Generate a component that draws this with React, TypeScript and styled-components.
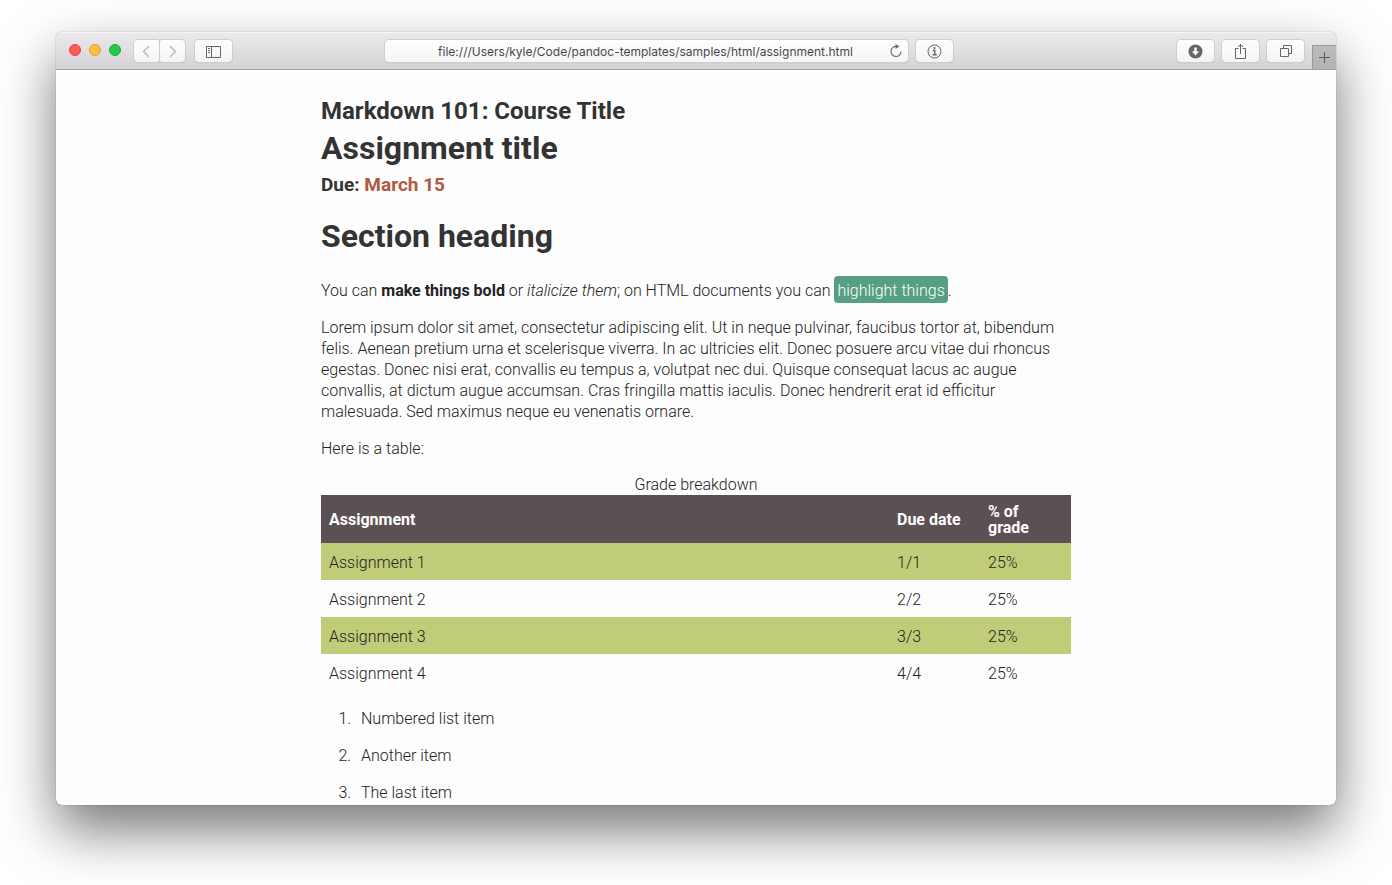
import React from "react";
import styled, { createGlobalStyle } from "styled-components";

const GlobalStyle = createGlobalStyle`
  *, *::before, *::after { box-sizing: border-box; }
  body { margin: 0; background: #fff; }
`;

const Desktop = styled.div`
  display: flex;
  height: 100vh;
  padding: 32px 56px 80px;
  overflow: hidden;
`;

const BrowserWindow = styled.div`
  flex: 1;
  min-width: 0;
  display: flex;
  flex-direction: column;
  overflow: hidden;
  border-radius: 6px;
  background: #fdfdfd;
  box-shadow: 0 0 1px rgba(0, 0, 0, 0.6), 0 25px 55px rgba(0, 0, 0, 0.54);
`;

const Toolbar = styled.header`
  flex: none;
  display: flex;
  height: 38px;
  background: linear-gradient(#ebe9eb, #d5d3d5);
  border-top: 1px solid #f5f4f5;
  border-bottom: 1px solid #a3a1a3;
`;

const ToolGroup = styled.div<{ $end?: boolean }>`
  flex: 1 0 ${(p) => (p.$end ? "67px" : "0px")};
  display: flex;
  align-items: center;
  justify-content: ${(p) => (p.$end ? "flex-end" : "flex-start")};
  gap: ${(p) => (p.$end ? "8px" : "10px")};
  padding-left: ${(p) => (p.$end ? "0" : "13px")};
`;

const TrafficLights = styled.div`
  display: flex;
  gap: 8px;
  margin: 0 3px 2px 0;
`;

const Light = styled.button<{ $fill: string; $edge: string }>`
  width: 12px;
  height: 12px;
  padding: 0;
  border: 1px solid ${(p) => p.$edge};
  border-radius: 50%;
  background: ${(p) => p.$fill};
`;

const NavPair = styled.div`
  display: flex;
  gap: 1px;
`;

const ToolButton = styled.button<{ $width?: number; $side?: "left" | "right" }>`
  display: flex;
  align-items: center;
  justify-content: center;
  flex: none;
  width: ${(p) => p.$width ?? 37}px;
  height: 22px;
  padding: 0;
  border: 0;
  border-radius: ${(p) => (p.$side === "left" ? "4px 2px 2px 4px" : p.$side === "right" ? "2px 4px 4px 2px" : "4px")};
  background: linear-gradient(#fefefe, #f4f4f4);
  box-shadow: 0 0 0 1px #cfcdcf, 0 1px 1px #aaa;
  color: #666;
`;

const AddressGroup = styled.div`
  flex: 0 1 568px;
  display: flex;
  align-items: center;
  gap: 8px;
`;

const AddressBar = styled.div`
  flex: 1;
  display: flex;
  align-items: center;
  height: 22px;
  padding: 0 5px 0 17px;
  border-radius: 4px;
  background: linear-gradient(#fefefe, #f6f6f6);
  box-shadow: 0 0 0 1px #cfcdcf, 0 1px 1px #aaa;
`;

const AddressInput = styled.input`
  flex: 1;
  min-width: 0;
  padding: 2px 0 0;
  border: 0;
  outline: 0;
  background: transparent;
  color: #484848;
  font: 12px/20px Inter, "Liberation Sans", sans-serif;
  text-align: center;
`;

const ReloadButton = styled.button`
  display: flex;
  padding: 0;
  border: 0;
  background: transparent;
  color: #6c6c6c;
`;

const NewTabButton = styled.button`
  align-self: flex-end;
  display: flex;
  align-items: center;
  justify-content: center;
  width: 24px;
  height: 24px;
  padding: 0;
  border: 1px solid #9b999b;
  border-width: 1px 0 0 1px;
  background: linear-gradient(#bdbbbd, #b3b1b3);
  color: #5c5c5c;
`;

const Page = styled.main`
  flex: 1;
  min-height: 0;
  overflow: hidden;
  padding: 25px 16px 0;
  color: #222;
  font: 300 16px/21px Roboto, "Liberation Sans", sans-serif;
`;

const Article = styled.article`
  max-width: 750px;
  margin: 0 auto;
`;

const Course = styled.h2`
  margin: 0;
  color: #333;
  font: 700 24px/32px Roboto, sans-serif;
`;

const Title = styled.h1`
  margin: 0;
  color: #333;
  font: 700 32px/43px Roboto, sans-serif;
`;

const SectionHeading = styled(Title)`
  margin: 15px 0 22px;
`;

const Due = styled.h3`
  margin: 0;
  color: #333;
  font: 700 19px/30px Roboto, sans-serif;

  time { color: #b35840; }
`;

const Paragraph = styled.p`
  margin: 16px 0;
`;

const Mark = styled.mark`
  padding: 5px 3px 3px;
  border-radius: 4px;
  background: #569f82;
  color: #fff;
`;

const Strong = styled.strong`
  font-weight: 700;
`;

const GradeTable = styled.table`
  width: 100%;
  table-layout: fixed;
  border-collapse: collapse;

  caption { line-height: 20px; }
  th, td { padding: 9px 8px 7px; text-align: left; }
`;

const Column = styled.col<{ $width?: number }>`
  width: ${(p) => (p.$width ? `${p.$width}px` : "auto")};
`;

const HeadRow = styled.tr`
  background: #5b5154;
  color: #fff;
  font-weight: 700;
  line-height: 16px;
`;

const BodyRow = styled.tr`
  &:nth-child(odd) { background: #c0cc77; }
`;

const NumberedList = styled.ol`
  margin: 17px 0;
  padding-left: 34px;

  li { padding-left: 6px; }
`;

const rows = [
  ["Assignment 1", "1/1", "25%"],
  ["Assignment 2", "2/2", "25%"],
  ["Assignment 3", "3/3", "25%"],
  ["Assignment 4", "4/4", "25%"],
];

const Icon = ({ size = 15, children }: { size?: number; children: React.ReactNode }) => (
  <svg width={size} height={size} viewBox={`0 0 ${size} ${size}`} fill="none" stroke="currentColor" strokeWidth="1" aria-hidden="true">
    {children}
  </svg>
);

export default function App() {
  return (
    <Desktop>
      <GlobalStyle />
      <BrowserWindow>
        <Toolbar>
          <ToolGroup>
            <TrafficLights>
              <Light $fill="#fc5b57" $edge="#e2463f" aria-label="Close" />
              <Light $fill="#fdbe41" $edge="#e0a032" aria-label="Minimize" />
              <Light $fill="#24cb4b" $edge="#14ae3a" aria-label="Zoom" />
            </TrafficLights>
            <NavPair>
              <ToolButton $width={25} $side="left" aria-label="Back">
                <Icon><path d="M10 2 4.500 7.500 10 13" stroke="#bdbdbd" strokeWidth="1.500" /></Icon>
              </ToolButton>
              <ToolButton $width={25} $side="right" aria-label="Forward">
                <Icon><path d="M5 2l5.500 5.500L5 13" stroke="#bdbdbd" strokeWidth="1.500" /></Icon>
              </ToolButton>
            </NavPair>
            <ToolButton aria-label="Show sidebar">
              <Icon>
                <path d="M.5 2.500h14v11H.5zM5.500 2.500v11" />
                <path d="M2 4.500h2M2 6.500h2M2 8.500h2" />
              </Icon>
            </ToolButton>
          </ToolGroup>
          <AddressGroup>
            <AddressBar>
              <AddressInput
                aria-label="Address"
                readOnly
                value="file:///Users/kyle/Code/pandoc-templates/samples/html/assignment.html"
              />
              <ReloadButton aria-label="Reload">
                <Icon size={14}>
                  <path d="M7.500 2.500A5 5 0 1 0 12 7.500" strokeWidth="1.200" />
                  <path d="M6.500 0v5l4-2.500z" fill="currentColor" stroke="none" />
                </Icon>
              </ReloadButton>
            </AddressBar>
            <ToolButton aria-label="Page information">
              <Icon>
                <circle cx="7.500" cy="7.500" r="6.500" />
                <path d="M5.800 6.500h2v4.300M5.500 10.800h4.300" strokeWidth="1.400" />
                <circle cx="7.500" cy="4.100" r="1.100" fill="currentColor" stroke="none" />
              </Icon>
            </ToolButton>
          </AddressGroup>
          <ToolGroup $end>
            <ToolButton aria-label="Downloads">
              <Icon>
                <circle cx="7.500" cy="7.500" r="7" fill="currentColor" stroke="none" />
                <path d="M6.300 3.500h2.400v4h2.500l-3.700 4-3.700-4h2.500z" fill="#fff" stroke="none" />
              </Icon>
            </ToolButton>
            <ToolButton aria-label="Share">
              <Icon><path d="M5.500 4.500h-3v10h10v-10h-3M7.500 10V0M5 3l2.500-2.500L10 3" /></Icon>
            </ToolButton>
            <ToolButton aria-label="Show all tabs">
              <Icon><path d="M2.500 4.500h8v8h-8zM5.500 4.500v-3h8v8h-3" /></Icon>
            </ToolButton>
            <NewTabButton aria-label="New tab">
              <Icon size={11}><path d="M5.500 0v11M0 5.500h11" /></Icon>
            </NewTabButton>
          </ToolGroup>
        </Toolbar>
        <Page>
          <Article>
            <Course>Markdown 101: Course Title</Course>
            <Title>Assignment title</Title>
            <Due>Due: <time>March 15</time></Due>
            <SectionHeading as="h2">Section heading</SectionHeading>
            <Paragraph>
              You can <Strong>make things bold</Strong> or <em>italicize them</em>; on HTML documents you can{" "}
              <Mark>highlight things</Mark>.
            </Paragraph>
            <Paragraph>
              Lorem ipsum dolor sit amet, consectetur adipiscing elit. Ut in neque pulvinar, faucibus tortor at,
              bibendum felis. Aenean pretium urna et scelerisque viverra. In ac ultricies elit. Donec posuere arcu
              vitae dui rhoncus egestas. Donec nisi erat, convallis eu tempus a, volutpat nec dui. Quisque consequat
              lacus ac augue convallis, at dictum augue accumsan. Cras fringilla mattis iaculis. Donec hendrerit erat
              id efficitur malesuada. Sed maximus neque eu venenatis ornare.
            </Paragraph>
            <Paragraph>Here is a table:</Paragraph>
            <GradeTable>
              <caption>Grade breakdown</caption>
              <colgroup>
                <Column />
                <Column $width={91} />
                <Column $width={91} />
              </colgroup>
              <thead>
                <HeadRow>
                  <th scope="col">Assignment</th>
                  <th scope="col">Due date</th>
                  <th scope="col">% of grade</th>
                </HeadRow>
              </thead>
              <tbody>
                {rows.map(([name, date, share]) => (
                  <BodyRow key={name}>
                    <td>{name}</td>
                    <td>{date}</td>
                    <td>{share}</td>
                  </BodyRow>
                ))}
              </tbody>
            </GradeTable>
            <NumberedList>
              <li><Paragraph>Numbered list item</Paragraph></li>
              <li><Paragraph>Another item</Paragraph></li>
              <li><Paragraph>The last item</Paragraph></li>
            </NumberedList>
          </Article>
        </Page>
      </BrowserWindow>
    </Desktop>
  );
}
